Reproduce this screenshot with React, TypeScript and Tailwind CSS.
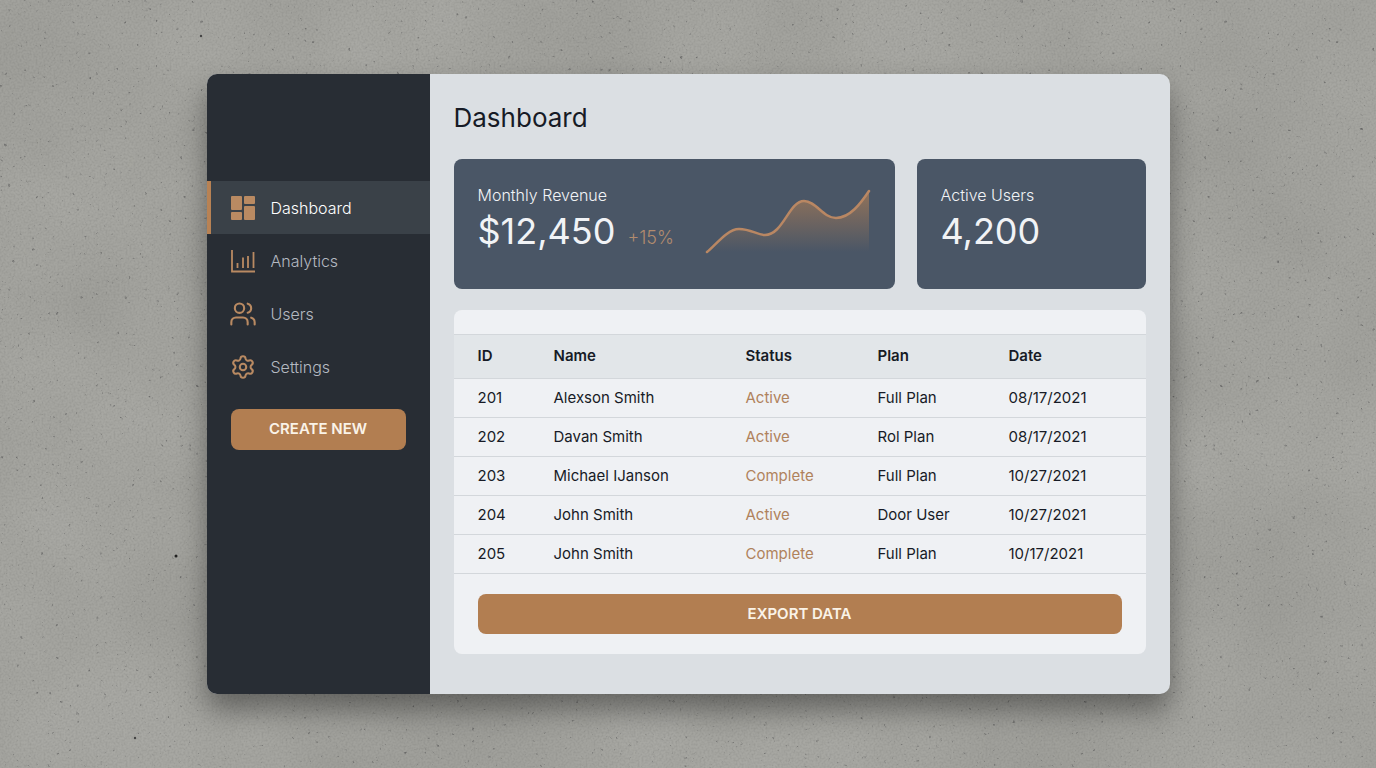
import React from "react";
import { Users, Settings } from "lucide-react";

const menu = ["Dashboard", "Analytics", "Users", "Settings"];

const rows = [
  { id: "201", name: "Alexson Smith", status: "Active", plan: "Full Plan", date: "08/17/2021" },
  { id: "202", name: "Davan Smith", status: "Active", plan: "Rol Plan", date: "08/17/2021" },
  { id: "203", name: "Michael IJanson", status: "Complete", plan: "Full Plan", date: "10/27/2021" },
  { id: "204", name: "John Smith", status: "Active", plan: "Door User", date: "10/27/2021" },
  { id: "205", name: "John Smith", status: "Complete", plan: "Full Plan", date: "10/17/2021" },
];

const AnalyticsIcon: React.FC = () => (
  <svg width="26" height="26" viewBox="0 0 26 26" fill="none" stroke="currentColor" strokeWidth="1.8">
    <path d="M2 2v21.500h23" />
    <path d="M7.500 20v-5M13 20V9.500M18 20V8M23.500 20V4" />
  </svg>
);

const MenuIcon: React.FC<{ name: string }> = ({ name }) => {
  if (name === "Analytics") return <AnalyticsIcon />;
  if (name === "Users") return <Users size={28} strokeWidth={1.8} />;
  if (name === "Settings") {
    return <Settings size={26} strokeWidth={1.9} />;
  }
  return (
    <svg width="26" height="26" viewBox="0 0 26 26" fill="currentColor">
      <rect x="1" y="1" width="11" height="14" rx="1" />
      <rect x="14" y="1" width="11" height="8" rx="1" />
      <rect x="1" y="17" width="11" height="8" rx="1" />
      <rect x="14" y="11" width="11" height="14" rx="1" />
    </svg>
  );
};

// 水泥背景
const Concrete: React.FC = () => (
  <svg className="absolute inset-0 h-full w-full" aria-hidden="true">
    <filter id="cloud" x="0" y="0" width="100%" height="100%" colorInterpolationFilters="sRGB">
      <feTurbulence type="fractalNoise" baseFrequency="0.006" numOctaves="3" seed="4" />
      <feColorMatrix values="0 0 0 0 0.4  0 0 0 0 0.4  0 0 0 0 0.38  0.25 0 0 0 -0.06" />
    </filter>
    <filter id="grain" x="0" y="0" width="100%" height="100%" colorInterpolationFilters="sRGB">
      <feTurbulence type="fractalNoise" baseFrequency="0.5" numOctaves="2" seed="9" />
      <feColorMatrix values="0 0 0 0 0.35  0 0 0 0 0.35  0 0 0 0 0.34  0.35 0 0 0 -0.13" />
    </filter>
    <filter id="specks" x="0" y="0" width="100%" height="100%" colorInterpolationFilters="sRGB">
      <feTurbulence type="fractalNoise" baseFrequency="0.25" numOctaves="2" seed="21" />
      <feColorMatrix values="0 0 0 0 0.35  0 0 0 0 0.35  0 0 0 0 0.35  4 0 0 0 -2.85" />
    </filter>
    <rect width="100%" height="100%" filter="url(#cloud)" />
    <rect width="100%" height="100%" filter="url(#grain)" />
    <rect width="100%" height="100%" filter="url(#specks)" />
    <circle cx="176" cy="556" r="1.5" fill="#222" />
    <circle cx="201" cy="36" r="1.2" fill="#444" />
    <circle cx="135" cy="738" r="1.2" fill="#444" />
  </svg>
);

const RevenueChart: React.FC = () => {
  const line =
    "M2 63C10 57 22 40 34 40C46 40 52 46 60 46C78 46 84 12 99 12C111 12 118 29 131 29C145 29 156 14 164 2";
  return (
    <svg width="166" height="66" viewBox="0 0 166 66" fill="none" role="img" aria-label="Revenue trend">
      <defs>
        <linearGradient id="area" x1="0" y1="0" x2="0" y2="1">
          <stop offset="0" stopColor="#b88254" stopOpacity="0.65" />
          <stop offset="1" stopColor="#b88254" stopOpacity="0" />
        </linearGradient>
      </defs>
      <path d={`${line}V63H2Z`} fill="url(#area)" />
      <path d={line} stroke="#b98763" strokeWidth="2.5" strokeLinecap="round" />
    </svg>
  );
};

const App: React.FC = () => {
  return (
    <div className="relative flex min-h-screen items-center justify-center bg-[#a8a8a3] font-['Inter','Liberation_Sans',sans-serif]">
      <Concrete />
      <div className="relative flex w-full max-w-[963px] overflow-hidden rounded-[10px] bg-[#dbdfe3] shadow-[0_16px_28px_rgba(0,0,0,0.38)]">
        {/* sidebar */}
        <aside className="w-[223px] shrink-0 bg-[#282d34] pt-[107px]">
          <nav>
            {menu.map((name, i) => (
              <a
                key={name}
                href="#"
                className={
                  i === 0
                    ? "flex h-[53px] items-center border-l-4 border-[#b88254] bg-[#3a4148] pl-5 text-base font-light text-white"
                    : "flex h-[53px] items-center border-l-4 border-transparent pl-5 text-base font-light text-[#b4b9c1]"
                }
              >
                <span className="flex w-6 shrink-0 justify-center text-[#b98a62]">
                  <span className="shrink-0">
                    <MenuIcon name={name} />
                  </span>
                </span>
                <span className="ml-4">{name}</span>
              </a>
            ))}
          </nav>
          <div className="px-6 pt-4">
            <button className="h-[41px] w-full rounded-lg bg-[#b27e51] text-[15px] font-semibold text-[#faf3e8]">
              CREATE NEW
            </button>
          </div>
        </aside>

        {/* main */}
        <main className="min-w-0 flex-1 px-6 pt-6 pb-10 text-[#171b26]">
          <h1 className="text-[26px] leading-10">Dashboard</h1>

          <div className="mt-[21px] flex gap-[22px]">
            <section className="flex h-[130px] flex-1 justify-between rounded-lg bg-[#4a5666] px-6 pt-6 text-[#f1f3f6]">
              <div>
                <h2 className="text-base leading-6 font-light">Monthly Revenue</h2>
                <p className="flex items-baseline gap-3 text-4xl leading-[48px]">
                  $12,450
                  <span className="text-lg font-light text-[#b28b6e]">+15%</span>
                </p>
              </div>
              <div className="pt-1.5">
                <RevenueChart />
              </div>
            </section>
            <section className="h-[130px] w-[229px] rounded-lg bg-[#4a5666] px-6 pt-6 text-[#f1f3f6]">
              <h2 className="text-base leading-6 font-light">Active Users</h2>
              <p className="text-4xl leading-[48px]">4,200</p>
            </section>
          </div>

          <section className="mt-[21px] rounded-lg bg-[#eff1f4] pt-6 pb-5">
            <table className="w-full table-fixed border-collapse text-left text-[15px]">
              <thead>
                <tr className="h-11 border-y border-[#d3d7db] bg-[#e2e6e9]">
                  <th className="w-[100px] pl-6 font-semibold">ID</th>
                  <th className="w-[192px] font-semibold">Name</th>
                  <th className="w-[132px] font-semibold">Status</th>
                  <th className="w-[131px] font-semibold">Plan</th>
                  <th className="font-semibold">Date</th>
                </tr>
              </thead>
              <tbody>
                {rows.map((row) => (
                  <tr key={row.id} className="h-[39px] border-b border-[#d3d7db]">
                    <td className="pl-6">{row.id}</td>
                    <td>{row.name}</td>
                    <td className="text-[#af825c]">{row.status}</td>
                    <td>{row.plan}</td>
                    <td>{row.date}</td>
                  </tr>
                ))}
              </tbody>
            </table>
            <div className="px-6 pt-5">
              <button className="h-10 w-full rounded-lg bg-[#b27e51] text-[15px] font-semibold text-[#faf3e8]">
                EXPORT DATA
              </button>
            </div>
          </section>
        </main>
      </div>
    </div>
  );
};

export default App;
